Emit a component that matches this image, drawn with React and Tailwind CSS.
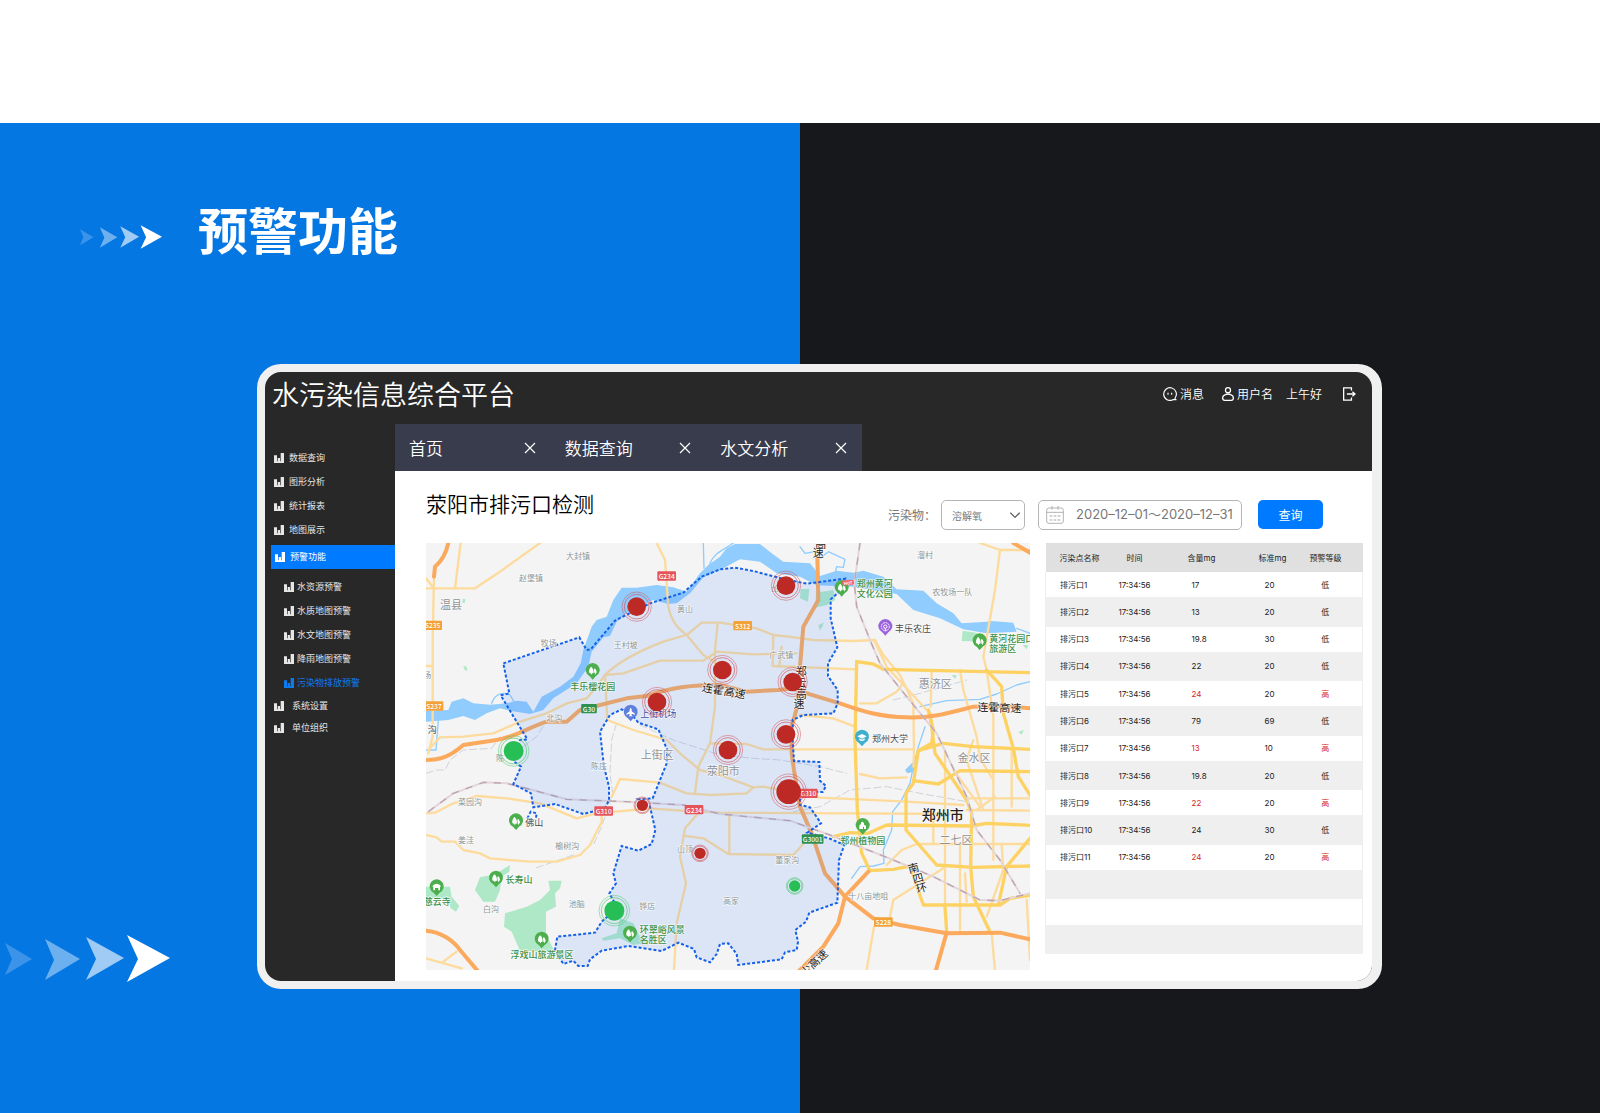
import { useState } from 'react';

const menuTop = ['数据查询', '图形分析', '统计报表', '地图展示'];
const menuWarning = ['水资源预警', '水质地图预警', '水文地图预警', '降雨地图预警', '污染物排放预警'];
const menuBottom = ['系统设置', '单位组织'];
const openTabs = ['首页', '数据查询', '水文分析'];

const rows = [
  { name: '排污口1', amount: '17', limit: '20', level: '低' },
  { name: '排污口2', amount: '13', limit: '20', level: '低' },
  { name: '排污口3', amount: '19.8', limit: '30', level: '低' },
  { name: '排污口4', amount: '22', limit: '20', level: '低' },
  { name: '排污口5', amount: '24', limit: '20', level: '高' },
  { name: '排污口6', amount: '79', limit: '69', level: '低' },
  { name: '排污口7', amount: '13', limit: '10', level: '高' },
  { name: '排污口8', amount: '19.8', limit: '20', level: '低' },
  { name: '排污口9', amount: '22', limit: '20', level: '高' },
  { name: '排污口10', amount: '24', limit: '30', level: '低' },
  { name: '排污口11', amount: '24', limit: '20', level: '高' },
  {},
  {},
  {},
];

// map canvas units are thirds of a pixel
const BOUNDARY =
  'M250,370 L478,292 L500,330 L512,328 L585,242 L612,228 L690,190 L790,158 L845,110 L900,88 L945,83 L1000,93 L1095,118 L1160,131 L1275,116 L1255,158 L1232,178 L1232,235 L1252,322 L1224,370 L1224,408 L1253,450 L1253,490 L1240,520 L1150,525 L1118,540 L1118,600 L1122,663 L1198,666 L1200,722 L1218,738 L1208,756 L1140,756 L1140,795 L1170,802 L1203,850 L1162,878 L1230,896 L1273,915 L1257,960 L1252,1088 L1168,1118 L1158,1145 L1126,1170 L1134,1205 L1130,1230 L1095,1237 L1085,1258 L955,1275 L950,1242 L925,1210 L900,1212 L890,1242 L870,1267 L830,1252 L822,1227 L775,1208 L725,1233 L625,1218 L545,1232 L510,1258 L503,1278 L475,1278 L460,1262 L430,1272 L405,1230 L412,1190 L525,1178 L545,1145 L585,1110 L582,1085 L568,1060 L588,1030 L580,1000 L605,918 L655,932 L695,912 L706,870 L690,800 L655,778 L698,775 L740,670 L742,630 L715,568 L655,548 L632,520 L605,508 L570,525 L540,575 L552,680 L567,740 L567,780 L555,805 L490,822 L405,792 L340,802 L333,760 L280,732 L303,680 L282,665 L300,600 L322,598 L242,466 L268,460 Z';

const water = [
  'M18,512 L85,510 L95,485 L130,475 L160,490 L210,494 L260,490 L290,482 L320,485 L340,515 L365,470 L420,440 L460,410 L482,370 L490,330 L515,260 L530,240 L560,230 L580,180 L605,143 L650,143 L710,135 L760,142 L800,155 L840,100 L865,75 L900,50 L920,25 L945,12 L1020,12 L1055,40 L1090,65 L1170,70 L1200,108 L1250,92 L1300,98 L1330,92 L1390,110 L1430,148 L1510,152 L1550,190 L1600,220 L1625,250 L1700,245 L1715,243 L1780,248 L1790,275 L1700,280 L1630,268 L1560,235 L1480,210 L1430,162 L1300,140 L1190,136 L1140,110 L1070,100 L1020,65 L960,58 L900,90 L850,112 L810,160 L770,190 L745,192 L700,180 L620,220 L590,245 L570,288 L550,292 L515,335 L505,380 L470,430 L400,475 L370,510 L330,522 L270,512 L240,505 L200,520 L165,540 L130,528 L85,540 L18,545 Z',
  'M1455,690 L1485,660 L1482,695 L1462,700 Z',
];

const streams = [
  'M215,490 C225,460 250,455 270,465 L285,490',
  'M18,630 L48,630 L55,540',
  'M852,85 L850,9',
  'M870,70 C880,40 910,30 940,9',
  'M1140,20 L1155,40 L1185,35 L1200,55 L1225,35 L1275,58 L1270,82 L1250,80 L1245,100',
  'M1500,500 L1580,482 L1680,478 L1730,462 L1790,435 L1830,425',
  'M1515,560 L1495,620 L1480,680 L1470,730 L1445,780 L1418,815 L1415,870 L1390,930 L1392,970 L1360,978 L1320,980 L1295,1015',
  'M1790,265 L1830,280',
];

const woods = [
  'M270,975 L268,995 L245,1010 L240,1050 L225,1085 L190,1085 L165,1050 L180,1012 L225,1003 Z',
  'M385,1022 L425,1022 L420,1045 L405,1060 L408,1100 L378,1115 L378,1185 L402,1230 L350,1235 L300,1232 L275,1175 L252,1160 L255,1120 L320,1100 L360,1080 L390,1050 Z',
  'M18,1040 L90,1040 L95,1070 L118,1098 L108,1115 L92,1105 L85,1075 L18,1075 Z',
  'M545,1195 L590,1180 L600,1135 L640,1150 L660,1190 L695,1205 L640,1215 L600,1195 L550,1202 Z',
  'M1142,148 L1168,146 L1164,185 L1140,175 Z',
  'M1188,158 L1240,150 L1246,180 L1220,195 L1186,203 Z',
  'M1628,272 L1668,278 L1695,305 L1625,303 Z',
  'M128,176 L136,178 L134,190 L128,188 Z',
  'M130,378 L140,380 L142,392 L134,390 Z',
  'M1195,255 L1212,248 L1208,258 L1200,272 Z',
  'M1595,405 L1610,405 L1606,418 Z',
  'M1808,315 L1825,315 L1820,328 Z',
  'M1795,575 L1812,570 L1805,584 Z',
];

const minorRoads = [
  'M42,110 L38,300 L38,590 L25,640',
  'M18,145 L165,145 L240,95 L360,9',
  'M122,9 L105,145',
  'M18,115 L42,145',
  'M18,378 L38,378',
  'M710,9 L735,60 L745,200 C755,250 780,270 800,285 L850,345 L910,380',
  'M798,285 L730,305 C640,340 590,370 555,405 L530,440 L500,475 L440,490 L380,520 L300,545 L220,580 L130,590 L60,592 L25,630',
  'M800,285 L845,248 L900,248 L1010,265 L1060,285 L1105,290 L1180,300 L1300,303 L1365,300 L1390,345 L1440,405 L1480,490 L1482,640 L1480,680',
  'M555,405 L610,400 L720,362 L850,362 L890,335 L1000,343 L1130,340',
  'M893,250 L885,330 L885,500 L870,610 L835,680 L825,760',
  'M555,405 L562,540 L640,570 L740,600 L780,640 L840,690 L900,705 L1000,742 L1030,740 L1200,773 L1460,785 L1630,795',
  'M1060,285 L1058,378 L1310,388',
  'M1085,320 L1078,378',
  'M1740,30 L1725,150 L1690,350 L1700,390',
  'M1680,9 L1740,30 L1830,30',
  'M1320,490 L1370,490 L1430,455 L1450,430',
  'M1140,525 L1240,535 L1305,560',
  'M870,610 L980,612 L1030,628 L1480,628',
  'M1535,390 L1532,500',
  'M1620,390 L1630,450 L1670,590 L1680,655 L1720,720',
  'M1700,390 L1720,530 L1720,960',
  'M1362,300 L1400,380 L1520,510',
  'M18,820 L45,818 L100,790 L170,768 L260,775 L360,790 L470,835 L530,820 L640,810 L690,805 L800,813 L900,818 L1620,822',
  'M18,885 L50,892 L65,905 L105,905 L130,930 L180,940 L210,955 L330,965 L410,965 L480,945 L510,915 L545,845 L545,820',
  'M575,770 L600,717 L720,728 L800,760 L870,765 L980,760 L1000,742',
  'M830,825 L795,865 L780,950 L798,1030 L770,1150 L762,1290',
  'M790,887 L850,895 L925,942 L1120,945 L1160,900',
  'M928,818 L928,942',
  'M18,1255 L125,1285',
  'M70,1265 L110,1235',
  'M1320,702 L1380,715 L1460,712',
  'M1540,822 L1540,912',
  'M1830,912 L1490,912 L1445,930 L1400,975',
  'M1410,1130 L1420,1080 L1570,985',
  'M1362,1160 L1340,1290',
  'M1575,630 L1575,1100',
  'M1620,912 L1620,1175',
  'M1745,912 L1750,990 L1700,1130',
  'M1640,775 L1830,775',
  'M1640,810 L1830,812',
  'M1660,600 L1640,660 L1690,810',
  'M1715,1180 L1725,1290',
  'M1820,1080 L1830,1260',
  'M1635,1000 L1640,1085',
  'M1600,690 L1680,800',
  'M1670,810 L1725,770',
  'M1775,630 L1775,800',
];

const mainRoads = [
  'M1310,365 L1305,600 L1312,810 L1325,940 L1350,992 L1420,988 L1470,978 L1510,1095 L1740,1095 L1770,1075 L1830,1066',
  'M1310,365 L1360,372 L1390,388 L1830,398',
  'M1700,390 L1745,440 L1750,520 L1780,625 L1795,710 L1830,765',
  'M1830,628 L1660,620 L1570,610 L1495,632 L1480,730 L1458,760 L1458,870 L1550,975 L1660,982 L1830,978',
  'M1525,510 L1540,570 L1535,610 L1495,632',
  'M1530,520 L1545,640 L1640,780 L1655,820 L1652,980 L1660,1070 L1712,1180',
  'M1240,890 L1290,878 L1345,880 L1400,855 L1655,858 L1700,850 L1830,856',
  'M1480,722 L1555,732 L1620,692 L1830,695',
  'M1575,1100 L1580,1175',
  'M1735,1095 L1760,980 L1830,895',
];

const expressways = [
  'M85,9 Q75,55 45,80 L42,110',
  'M18,660 C60,660 90,650 130,615 L230,600 C290,590 330,560 380,545 L440,545 L480,510 L620,475 L680,468 C760,440 820,435 900,435 L980,455 L1075,450 L1118,445 L1170,463 L1260,490 C1330,515 1380,530 1460,532 C1540,535 1600,515 1660,500 L1740,497 L1830,505',
  'M1192,50 L1195,180 L1150,260 L1140,380 L1137,480 L1115,560 L1115,640 L1122,690 L1140,800 L1175,880 L1215,1000 L1275,1070 L1360,1135 L1440,1155 L1580,1180 L1740,1178 L1830,1198',
  'M1345,995 L1275,1070 L1255,1150 L1210,1220 L1130,1300',
  'M1580,1178 L1548,1290',
  'M18,1172 C60,1175 100,1200 120,1230 L175,1295',
  'M1780,9 L1830,38',
];

const railways = [
  'M1320,9 L1303,130 L1310,200 L1350,300 L1380,370 L1460,470 L1550,580 L1640,770 L1670,870 L1740,960 L1800,1060',
  'M25,815 L100,760 L190,727 L260,730 L330,748 L440,778 L620,785 L790,795 L900,822 L1110,842 L1230,885 L1420,960 L1540,1010 L1680,1080 L1740,1082 L1830,1060',
];

const byways = [
  'M18,700 L50,690 L75,690 L90,660 L130,630 L215,625 L240,590 M310,620 L350,590 L375,550',
  'M590,550 L575,600 L570,700 L578,760 L545,860 L520,915 M460,945 L345,985',
  'M660,555 L760,600 L900,645 L1000,655 L1080,660 L1200,680 L1280,700',
  'M1120,815 L1200,800 L1290,750 L1400,740 L1500,760 L1640,785',
  'M1420,480 L1500,460 L1640,420',
];

const labels = [
  { t: '大封镇', x: 474, y: 46 },
  { t: '赵堡镇', x: 333, y: 112 },
  { t: '温县', x: 93, y: 191, s: 'lg' },
  { t: '牧场', x: 386, y: 306 },
  { t: '王村坡', x: 617, y: 312 },
  { t: '黄山', x: 795, y: 205 },
  { t: '北沟', x: 403, y: 531 },
  { t: '上街区', x: 712, y: 641, s: 'lg' },
  { t: '沟', x: 37, y: 567, s: 'dark' },
  { t: '场', x: 22, y: 402 },
  { t: '陈庄', x: 537, y: 677 },
  { t: '陈', x: 240, y: 652 },
  { t: '邙山', x: 1076, y: 146 },
  { t: '荥阳市', x: 910, y: 691, s: 'lg' },
  { t: '菜园沟', x: 150, y: 784 },
  { t: '姜洼', x: 138, y: 897 },
  { t: '榆树沟', x: 442, y: 917 },
  { t: '山顶', x: 795, y: 924 },
  { t: '白沟', x: 213, y: 1104 },
  { t: '池脑', x: 470, y: 1089 },
  { t: '铧店', x: 682, y: 1095 },
  { t: '高家', x: 933, y: 1081 },
  { t: '董家沟', x: 1102, y: 958 },
  { t: '十八亩地咀', x: 1345, y: 1065 },
  { t: '二七区', x: 1608, y: 898, s: 'lg' },
  { t: '金水区', x: 1662, y: 650, s: 'lg' },
  { t: '惠济区', x: 1546, y: 430, s: 'lg' },
  { t: '郑州市', x: 1568, y: 823, s: 'city' },
  { t: '农牧场一队', x: 1597, y: 154 },
  { t: '溜村', x: 1515, y: 42 },
  { t: '广武镇', x: 1084, y: 343 },
  { t: '丰乐樱花园', x: 518, y: 438, s: 'park' },
  { t: '长寿山', x: 297, y: 1018, s: 'park' },
  { t: '慈云寺', x: 52, y: 1085, s: 'park' },
  { t: '浮戏山旅游景区', x: 366, y: 1242, s: 'park' },
  { t: '环翠峪风景', x: 727, y: 1167, s: 'park' },
  { t: '名胜区', x: 700, y: 1199, s: 'park' },
  { t: '郑州植物园', x: 1328, y: 902, s: 'park' },
  { t: '郑州黄河', x: 1364, y: 131, s: 'park' },
  { t: '文化公园', x: 1364, y: 161, s: 'park' },
  { t: '黄河花园口', x: 1775, y: 295, s: 'park' },
  { t: '旅游区', x: 1748, y: 325, s: 'park' },
  { t: '上街机场', x: 715, y: 520, s: 'airport' },
  { t: '佛山', x: 343, y: 846, s: 'dark' },
  { t: '郑州大学', x: 1410, y: 595, s: 'dark' },
  { t: '丰乐农庄', x: 1479, y: 264, s: 'dark' },
  { t: '连霍高速', x: 912, y: 450, s: 'road', r: 10 },
  { t: '连霍高速', x: 1738, y: 500, s: 'road', r: 2 },
  { t: '郑', x: 1144, y: 392, s: 'road' },
  { t: '云', x: 1144, y: 426, s: 'road' },
  { t: '高', x: 1144, y: 458, s: 'road' },
  { t: '速', x: 1137, y: 488, s: 'road' },
  { t: '高', x: 1202, y: 8, s: 'road' },
  { t: '速', x: 1195, y: 36, s: 'road' },
  { t: '南', x: 1480, y: 982, s: 'road', r: -15 },
  { t: '四', x: 1493, y: 1012, s: 'road', r: -15 },
  { t: '环', x: 1504, y: 1041, s: 'road', r: -15 },
  { t: '少高速', x: 1180, y: 1266, s: 'road', r: -43 },
];

const labelStyles = {
  sm: 'text-[24px] fill-[#8b9696]',
  lg: 'text-[33px] fill-[#8f9294]',
  city: 'text-[42px] fill-[#222222] font-medium',
  park: 'text-[27px] fill-[#3d9145] font-medium',
  airport: 'text-[27px] fill-[#3f4fa6]',
  dark: 'text-[27px] fill-[#4a4a4a]',
  road: 'text-[33px] fill-[#222222]',
};

const shields = [
  { t: 'G234', x: 740, y: 108, c: '#e5545a' },
  { t: 'S235', x: 38, y: 256, c: '#f2a238' },
  { t: 'S237', x: 42, y: 498, c: '#f2a238' },
  { t: 'G30', x: 507, y: 506, c: '#2f9152' },
  { t: 'S312', x: 968, y: 257, c: '#f2a238' },
  { t: 'G310', x: 551, y: 813, c: '#e5545a' },
  { t: 'G234', x: 822, y: 809, c: '#e5545a' },
  { t: 'G310', x: 1165, y: 760, c: '#e5545a' },
  { t: 'G3001', x: 1178, y: 897, c: '#2f9152' },
  { t: 'S228', x: 1390, y: 1146, c: '#f2a238' },
];

const pins = [
  { x: 518, y: 392 },
  { x: 1265, y: 143 },
  { x: 1679, y: 303 },
  { x: 288, y: 843 },
  { x: 228, y: 1015 },
  { x: 50, y: 1041, kind: 'temple' },
  { x: 365, y: 1198 },
  { x: 630, y: 1180 },
  { x: 1328, y: 857, kind: 'garden' },
  { x: 1396, y: 260, kind: 'farm', c: '#9a63dd' },
  { x: 1326, y: 592, kind: 'school', c: '#3fb0cc' },
  { x: 632, y: 517, kind: 'plane', c: '#5f7fdc' },
];

const outlets = [
  { x: 650, y: 200, r: 28 },
  { x: 907, y: 390, r: 28 },
  { x: 711, y: 486, r: 28 },
  { x: 1098, y: 137, r: 28 },
  { x: 1118, y: 426, r: 28 },
  { x: 1098, y: 583, r: 28 },
  { x: 924, y: 630, r: 28 },
  { x: 1106, y: 755, r: 37 },
  { x: 667, y: 796, r: 17 },
  { x: 840, y: 940, r: 17 },
  { x: 281, y: 633, r: 30, ok: true },
  { x: 583, y: 1112, r: 30, ok: true },
  { x: 1124, y: 1038, r: 17, ok: true },
];

function BarsIcon() {
  return (
    <svg viewBox="0 0 30 30" className="size-[10px] shrink-0" fill="currentColor" aria-hidden="true">
      <path d="M0 7H9V25H11V15H18V25H20V0H30V30H0Z" />
    </svg>
  );
}

function Chevrons({ className }) {
  return (
    <svg viewBox="0 0 165 47" className={className} fill="#fff" aria-hidden="true">
      <path opacity=".22" d="M0 8 27 24 0 40 7 24z" />
      <path opacity=".42" d="M40 4 75 24 40 45 49 25z" />
      <path opacity=".62" d="M81 2 119 23 81 45 91 24z" />
      <path d="M122 0 165 23 122 47 133 24z" />
    </svg>
  );
}

function Pin({ x, y, kind, c = '#4cae4c' }) {
  return (
    <g transform={`translate(${x} ${y})`}>
      <path d="M0 27 -9 17A21 21 0 1 1 9 17Z" fill={c} />
      {!kind && <path d="M-4 -12C-9 -10 -12 0 -11 5Q-9 9 -5 8V11H-2V8H2Q4 4 2 -2 -1 -10 -4 -12ZM6 -7Q2 -4 5 5L5 8H7V11H9V8Q13 7 12 3 10 -5 6 -7Z" fill="#fff" />}
      {kind === 'temple' && <path d="M-13 -2Q-9 -10 0 -10 9 -10 13 -2L10 0V10H5V3H-5V10H-10V0Z" fill="#fff" />}
      {kind === 'garden' && <path d="M-10 10V-1L-5 -5V-10L0 -12 4 -7V-3L10 0V10H4V3H1V10Z" fill="#fff" />}
      {kind === 'school' && <path d="M-14 -3 0 -10 14 -3 0 4ZM-8 3 0 7 8 3V8Q0 14 -8 8Z" fill="#fff" />}
      {kind === 'plane' && <path d="M0 -14 3 -9V-3L13 4V7L3 4V9L6 12H-6L-3 9V4L-13 7V4L-3 -3V-9Z" fill="#fff" />}
      {kind === 'farm' && (
        <g fill="none" stroke="#fff" strokeWidth="3">
          <circle r="12" strokeDasharray="5 2" />
          <circle r="5" />
          <path d="M0 5V14" />
        </g>
      )}
    </g>
  );
}

function Outlet({ x, y, r, ok }) {
  const color = ok ? '#27bf55' : '#bd2a26';
  const ring = ok ? '#4ac46f' : '#cf5059';
  const gap = r > 20 ? 9 : 5;
  return (
    <g transform={`translate(${x} ${y})`} fill="none" stroke={ring} strokeWidth="2">
      <circle r={r} fill={color} stroke="none" />
      <circle r={r + gap} />
      <circle r={r + gap * 2 - 2} strokeWidth="1.5" />
    </g>
  );
}

function OutletMap() {
  return (
    <svg
      viewBox="18 9 1812 1281"
      preserveAspectRatio="xMidYMid slice"
      className="h-[427px] w-full bg-[#f4f4f4]"
      role="img"
      aria-label="荥阳市排污口地图"
    >
      <g fill="#aee8c7">{woods.map((d) => <path key={d} d={d} />)}</g>
      <g fill="#90ccfd">{water.map((d) => <path key={d} d={d} />)}</g>
      <g fill="none" strokeLinejoin="round" strokeLinecap="round">
        <g stroke="#90ccfd" strokeWidth="4">{streams.map((d) => <path key={d} d={d} />)}</g>
        <g stroke="#cfd3da" strokeWidth="3" strokeDasharray="22 10">{byways.map((d) => <path key={d} d={d} />)}</g>
        <g stroke="#fddb9c" strokeWidth="7">{minorRoads.map((d) => <path key={d} d={d} />)}</g>
        <g stroke="#fdd262" strokeWidth="10">{mainRoads.map((d) => <path key={d} d={d} />)}</g>
        <g stroke="#fba95c" strokeWidth="12">{expressways.map((d) => <path key={d} d={d} />)}</g>
        <g stroke="#e3d6da" strokeWidth="6">{railways.map((d) => <path key={d} d={d} />)}</g>
        <g stroke="#bfa3ab" strokeWidth="4" strokeLinecap="butt" strokeDasharray="22 22">
          {railways.map((d) => <path key={d} d={d} />)}
        </g>
      </g>

      <path d={BOUNDARY} fill="#3c87ff" fillOpacity=".13" />
      <g fill="none" stroke="#1560e8" strokeWidth="6" strokeDasharray="9 6">
        <path d={BOUNDARY} />
        <path d="M322,835 L332,815 L350,820 L347,840" />
      </g>

      <g
        textAnchor="middle"
        dominantBaseline="central"
        stroke="#fff"
        strokeWidth="4"
        strokeOpacity=".7"
        paintOrder="stroke"
      >
        {labels.map(({ t, x, y, s = 'sm', r = 0 }) => (
          <text key={`${t}${x}`} transform={`translate(${x} ${y}) rotate(${r})`} className={labelStyles[s]}>
            {t}
          </text>
        ))}
      </g>

      {shields.map(({ t, x, y, c }) => {
        const w = t.length * 9 + 20;
        return (
          <g key={`${t}${x}`}>
            <rect x={x - w / 2} y={y - 14} width={w} height="28" rx="3" fill={c} />
            <text x={x} y={y} textAnchor="middle" dominantBaseline="central" className="fill-white text-[20px] font-medium">
              {t}
            </text>
          </g>
        );
      })}

      {pins.map((p) => <Pin key={`${p.x}`} {...p} />)}
      <g transform="translate(1284 128) rotate(-4)">
        <rect x="-18" y="-8" width="36" height="16" rx="8" fill="#f0646c" />
        <text textAnchor="middle" dominantBaseline="central" className="fill-white text-[12px] font-bold">HOT</text>
      </g>
      {outlets.map((o) => <Outlet key={`${o.x}-${o.y}`} {...o} />)}
    </svg>
  );
}

function OutletTable() {
  return (
    <table className="h-[411px] w-[317px] shrink-0 table-fixed border-collapse self-start font-['Inter','Noto_Sans_CJK_SC',sans-serif] text-[8px] leading-3 text-[#222]">
      <colgroup>
        <col className="w-[68px]" />
        <col className="w-[42px]" />
        <col className="w-[73px]" />
        <col className="w-[60px]" />
        <col className="w-[74px]" />
      </colgroup>
      <thead>
        <tr className="h-[29px] bg-[#e0e0e0] text-left">
          <th className="pl-[14px] font-normal">污染点名称</th>
          <th className="text-center font-normal">时间</th>
          <th className="pl-8 font-normal">含量mg</th>
          <th className="pl-[30px] font-normal">标准mg</th>
          <th className="text-center font-normal">预警等级</th>
        </tr>
      </thead>
      <tbody>
        {rows.map((row, idx) => {
          const tone = row.level === '高' ? 'text-[#d8232a]' : '';
          return (
            <tr key={idx} className="h-[29px] border-x border-[#efefef] bg-[#efefef] odd:h-[25px] odd:bg-white">
              <td className="pl-[14px]">{row.name}</td>
              <td className="text-center">{row.name && '17:34:56'}</td>
              <td className={`pl-9 ${tone}`}>{row.amount}</td>
              <td className="pl-9">{row.limit}</td>
              <td className={`text-center ${tone}`}>{row.level}</td>
            </tr>
          );
        })}
      </tbody>
    </table>
  );
}

function Sidebar() {
  return (
    <nav className="w-[130px] shrink-0 pt-[22px] text-[9px] text-[#e6e6e6]">
      <ul>
        {menuTop.map((item) => (
          <li key={item}>
            <a href="#" className="flex h-6 items-center gap-[5px] pl-[9px]"><BarsIcon />{item}</a>
          </li>
        ))}
        <li className="mt-[3px]">
          <a href="#" className="ml-1.5 flex h-6 items-center gap-[5px] bg-[#007bff] pl-1 text-white"><BarsIcon />预警功能</a>
          <ul className="pt-1.5">
            {menuWarning.map((item, idx) => (
              <li key={item}>
                <a href="#" className={`flex h-6 items-center gap-[3px] pl-[19px] ${idx === 4 ? 'text-[#0a7cf0]' : ''}`}>
                  <BarsIcon />{item}
                </a>
              </li>
            ))}
          </ul>
        </li>
        {menuBottom.map((item) => (
          <li key={item}>
            <a href="#" className="flex h-[22px] items-center gap-2 pl-[9px]"><BarsIcon />{item}</a>
          </li>
        ))}
      </ul>
    </nav>
  );
}

function TopBar() {
  return (
    <header className="flex h-[52px] items-center justify-between pb-2 pl-[7px] pr-4 text-white">
      <h2 className="text-[27px] font-[350] leading-9">水污染信息综合平台</h2>
      <div className="flex items-center text-[12px] font-[350] leading-4">
        <a href="#" className="flex items-center gap-[3px]">
          <svg viewBox="0 0 42 42" className="size-[14px]" fill="none" stroke="currentColor" strokeWidth="3.5" aria-hidden="true">
            <path d="M36 33A19 19 0 1 0 30 38H39Q36 37 36 33" strokeLinejoin="round" />
            <path d="M15 17v6M26 17v6" />
          </svg>
          消息
        </a>
        <a href="#" className="ml-[18px] flex items-center gap-[3px]">
          <svg viewBox="0 0 38 44" className="h-[14px] w-3" fill="none" stroke="currentColor" strokeWidth="4" aria-hidden="true">
            <circle cx="19" cy="10" r="8" />
            <path d="M11 24C5 26 2 30 2 35Q2 42 9 42H29Q36 42 36 35C36 30 33 26 27 24Q19 20 11 24Z" />
          </svg>
          用户名
        </a>
        <span className="ml-[13px]">上午好</span>
        <button type="button" aria-label="退出" className="ml-[21px]">
          <svg viewBox="0 0 40 42" className="h-[14px] w-[13px]" fill="none" stroke="currentColor" strokeWidth="4" aria-hidden="true">
            <path d="M26 10V2H2V40H26V32M12 21H36M29 14 37 21 29 28" />
          </svg>
        </button>
      </div>
    </header>
  );
}

function Filters() {
  const [pollutant, setPollutant] = useState('溶解氧');
  const [range, setRange] = useState('2020–12–01～2020–12–31');

  return (
    <form className="flex items-start pt-[29px] text-[#777]" onSubmit={(e) => e.preventDefault()}>
      <label htmlFor="pollutant" className="text-[12px] leading-[30px]">污染物：</label>
      <div className="relative ml-[5px]">
        <select
          id="pollutant"
          value={pollutant}
          onChange={(e) => setPollutant(e.target.value)}
          className="h-[30px] w-[84px] appearance-none rounded-[5px] border border-[#b5b5b5] bg-white pl-[10px] text-[10px]"
        >
          <option>溶解氧</option>
          <option>氨氮</option>
          <option>总磷</option>
        </select>
        <svg viewBox="0 0 30 18" className="pointer-events-none absolute right-[5px] top-3 h-1.5 w-2.5" fill="none" stroke="#555" strokeWidth="3.5" aria-hidden="true">
          <path d="M1 2 15 16 29 2" />
        </svg>
      </div>
      <label className="ml-[13px] flex h-[30px] w-[204px] items-center gap-3 rounded-[5px] border border-[#b5b5b5] pl-[7px]">
        <svg viewBox="0 0 54 54" className="size-[18px] shrink-0" fill="none" stroke="#a5a5a5" strokeWidth="2.5" aria-label="日期">
          <rect x="2" y="6" width="50" height="46" rx="7" />
          <path d="M2 19H52M18 0V11M36 0V11" />
          <path d="M11 30H43M11 42H43" strokeWidth="3.5" strokeDasharray="8 4" />
        </svg>
        <input
          type="text"
          value={range}
          onChange={(e) => setRange(e.target.value)}
          className="w-full min-w-0 bg-transparent font-['Inter','Noto_Sans_CJK_SC',sans-serif] text-[13px] outline-none"
        />
      </label>
      <button type="submit" className="ml-4 h-[29px] w-[65px] rounded-[5px] bg-[#007bff] text-[12px] text-white">查询</button>
    </form>
  );
}

export default function App() {
  const [tabs, setTabs] = useState(openTabs);

  return (
    <div lang="zh-CN" className="min-h-screen bg-white pt-[123px] font-['Noto_Sans_CJK_SC',sans-serif]">
      <section className="bg-[linear-gradient(90deg,#0577e3_50%,#17181c_50%)] pb-[124px] pt-[73px]">
        <div className="flex h-[72px] items-start pl-20">
          <Chevrons className="mt-[29px] h-6 w-[82px]" />
          <h1 className="ml-9 text-[50px] font-bold leading-[64px] text-white">预警功能</h1>
        </div>

        <div className="mt-24 flex items-end">
          <div className="w-[257px] shrink-0 pb-[7px] pl-[5px]">
            <Chevrons className="h-[47px] w-[165px]" />
          </div>

          <div className="mr-[218px] min-w-0 flex-1 rounded-[24px] border-8 border-r-[10px] border-[#f0f0f0] bg-[#f0f0f0]">
            <div className="overflow-hidden rounded-[16px] bg-[#282828]">
              <TopBar />
              <div className="flex">
                <Sidebar />
                <div className="min-w-0 flex-1">
                  <div className="flex h-[47px] w-[467px] bg-[#383c4d] font-[350] text-white">
                    {tabs.map((tab) => (
                      <div key={tab} className="flex flex-1 items-center justify-between pl-[14px] pr-[15px] text-[17px] leading-6">
                        <a href="#">{tab}</a>
                        <button
                          type="button"
                          aria-label={`关闭${tab}`}
                          onClick={() => setTabs(tabs.filter((t) => t !== tab))}
                        >
                          <svg viewBox="0 0 12 12" className="size-3" stroke="currentColor" strokeWidth="1.2" aria-hidden="true">
                            <path d="M1 1 11 11M11 1 1 11" />
                          </svg>
                        </button>
                      </div>
                    ))}
                  </div>
                  <main className="bg-white pb-[11px] pl-[31px] pr-[9px]">
                    <div className="flex h-[72px] items-start justify-between pr-10">
                      <h3 className="pt-[18px] text-[21px] font-[350] leading-7 text-black">荥阳市排污口检测</h3>
                      <Filters />
                    </div>
                    <div className="flex gap-[15px]">
                      <div className="min-w-0 flex-1">
                        <OutletMap />
                      </div>
                      <OutletTable />
                    </div>
                  </main>
                </div>
              </div>
            </div>
          </div>
        </div>
      </section>
    </div>
  );
}
